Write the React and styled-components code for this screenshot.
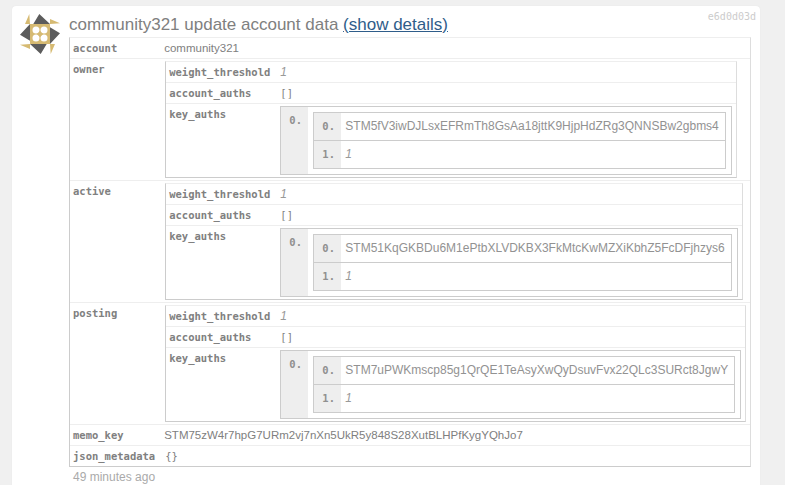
import React from 'react';
import styled, { createGlobalStyle } from 'styled-components';

const GlobalStyle = createGlobalStyle`
  html, body {
    margin: 0;
    height: 485px;
    overflow: hidden;
    background: #f0f0f0;
    font-family: "Liberation Sans", Arial, sans-serif;
  }
`;

const Page = styled.div`
  padding: 6px 25px 0 12px;
`;

const Card = styled.div`
  position: relative;
  display: flex;
  gap: 9px;
  height: 500px;
  padding: 8px 8px 0 8px;
  background: #fff;
  border-radius: 4px;
  box-shadow: 0 0 1px #ddd;
`;

const Avatar = styled.svg`
  flex: none;
  width: 40px;
  height: 40px;
`;

const Body = styled.div`
  min-width: 0;
`;

const Hash = styled.span`
  position: absolute;
  top: 5px;
  right: 4px;
  font: 10px "DejaVu Sans Mono", monospace;
  color: #ccc;
`;

const Title = styled.div`
  height: 23px;
  font-size: 17px;
  line-height: 22px;
  color: #808080;
  white-space: nowrap;
`;

const Details = styled.a`
  color: #2f5d8a;
  text-decoration: underline;
`;

const Table = styled.table`
  border-collapse: separate;
  border-spacing: 0;
  border-top: 1px solid #eee;
  border-right: 1px solid #ddd;
  border-bottom: 1px solid #ccc;
  border-left: 1px solid #ccc;
`;

const Row = styled.tr`
  &:not(:first-child) > * {
    border-top: 1px solid #eee;
  }
`;

const Key = styled.th`
  padding: 3px 10px 3px 3px;
  min-height: 14px;
  text-align: left;
  vertical-align: top;
  white-space: nowrap;
  font: bold 10.5px/14px "DejaVu Sans Mono", monospace;
  color: #808080;
`;

const Value = styled.td`
  padding: ${p => (p.$nested ? '2px 4px 2px 0' : '3px 5px 3px 0')};
  font-size: 11.5px;
  line-height: 14px;
  color: #808080;
  white-space: nowrap;
  text-indent: ${p => (p.$text ? '-1px' : '0')};
`;

const Num = styled.span`
  font-style: italic;
  font-size: 12px;
  color: #999;
`;

const Mono = styled.span`
  font: 10.5px "DejaVu Sans Mono", monospace;
  color: #808080;
`;

const ListTable = styled.table`
  border-collapse: separate;
  border-spacing: 0;
  border: 1px solid #ccc;
`;

const ListRow = styled.tr`
  &:not(:first-child) > * {
    border-top: 1px solid #ccc;
  }
`;

const Index = styled.th`
  width: 27px;
  padding: 6px 0 0 8px;
  box-sizing: border-box;
  background: #eee;
  text-align: left;
  vertical-align: top;
  font: bold 10.5px/14px "DejaVu Sans Mono", monospace;
  color: #909090;
`;

const Item = styled.td`
  padding: ${p => (p.$outer ? '5px' : '6px 6px 6px 4px')};
  font-size: 12px;
  line-height: 15px;
  color: #929292;
  white-space: nowrap;
`;

const Footer = styled.div`
  padding: 3px 0 0 4px;
  font-size: 12px;
  line-height: 14px;
  color: #aaa;
`;

function Identicon() {
  return (
    <Avatar viewBox="0 0 40 40">
      <path fill="#d6ba72" d="M10 10h20v20H10z" />
      <path fill="#d6ba72" d="M5 10h5L9.3 0zM30 5v5l10-.7zM35 30h-5l.7 10zM10 35v-5L0 30.7z" />
      <path fill="#5c5c5c" d="M13.3 10H30L19.3 0zM30 13.3V30l10-10.7zM26.7 30H10l10.7 10zM10 26.7V10L0 20.7z" />
      <circle cx="16" cy="16" r="3.5" fill="#fff" />
      <circle cx="24" cy="16" r="3.5" fill="#fff" />
      <circle cx="16" cy="24" r="3.5" fill="#fff" />
      <circle cx="24" cy="24" r="3.5" fill="#fff" />
      <path fill="#d6ba72" d="M20 17l3 3-3 3-3-3z" />
    </Avatar>
  );
}

function Authority({ keyName }) {
  return (
    <Table>
      <tbody>
        <Row>
          <Key>weight_threshold</Key>
          <Value><Num>1</Num></Value>
        </Row>
        <Row>
          <Key>account_auths</Key>
          <Value><Mono>[]</Mono></Value>
        </Row>
        <Row>
          <Key>key_auths</Key>
          <Value $nested>
            <ListTable>
              <tbody>
                <ListRow>
                  <Index>0.</Index>
                  <Item $outer>
                    <ListTable>
                      <tbody>
                        <ListRow>
                          <Index>0.</Index>
                          <Item>{keyName}</Item>
                        </ListRow>
                        <ListRow>
                          <Index>1.</Index>
                          <Item><Num>1</Num></Item>
                        </ListRow>
                      </tbody>
                    </ListTable>
                  </Item>
                </ListRow>
              </tbody>
            </ListTable>
          </Value>
        </Row>
      </tbody>
    </Table>
  );
}

export default function App() {
  return (
    <Page>
      <GlobalStyle />
      <Card>
        <Identicon />
        <Body>
          <Hash>e6d0d03d</Hash>
          <Title>
            community321 update account data <Details href="#">(show details)</Details>
          </Title>
          <Table>
            <tbody>
              <Row>
                <Key>account</Key>
                <Value $text>community321</Value>
              </Row>
              <Row>
                <Key>owner</Key>
                <Value $nested><Authority keyName="STM5fV3iwDJLsxEFRmTh8GsAa18jttK9HjpHdZRg3QNNSBw2gbms4" /></Value>
              </Row>
              <Row>
                <Key>active</Key>
                <Value $nested><Authority keyName="STM51KqGKBDu6M1ePtbXLVDKBX3FkMtcKwMZXiKbhZ5FcDFjhzys6" /></Value>
              </Row>
              <Row>
                <Key>posting</Key>
                <Value $nested><Authority keyName="STM7uPWKmscp85g1QrQE1TeAsyXwQyDsuvFvx22QLc3SURct8JgwY" /></Value>
              </Row>
              <Row>
                <Key>memo_key</Key>
                <Value $text>STM75zW4r7hpG7URm2vj7nXn5UkR5y848S28XutBLHPfKygYQhJo7</Value>
              </Row>
              <Row>
                <Key>json_metadata</Key>
                <Value><Mono>{'{}'}</Mono></Value>
              </Row>
            </tbody>
          </Table>
          <Footer>49 minutes ago</Footer>
        </Body>
      </Card>
    </Page>
  );
}
